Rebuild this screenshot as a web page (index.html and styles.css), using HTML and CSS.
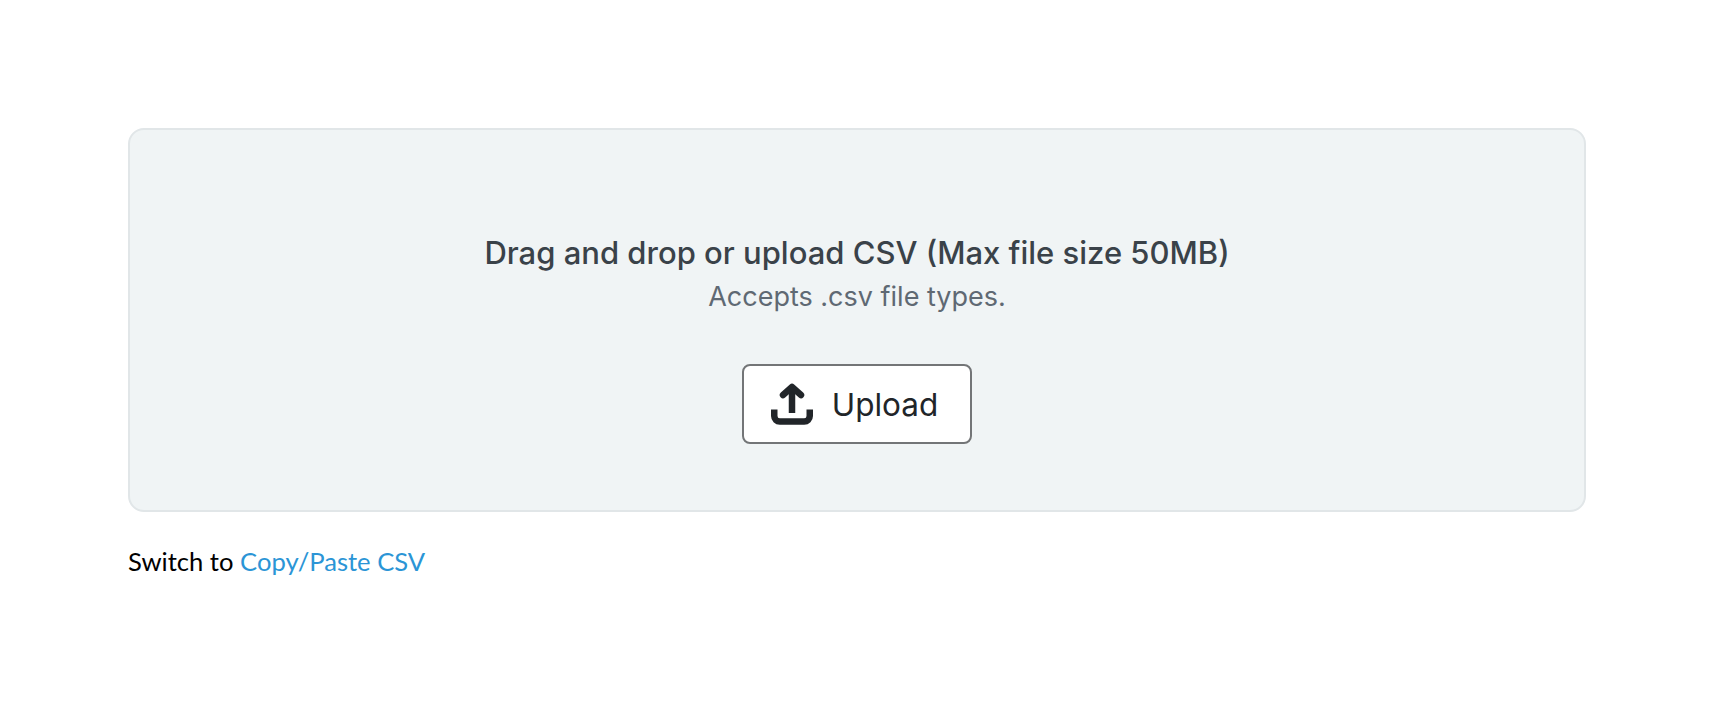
FILE: index.html
```html
<!DOCTYPE html>
<html>
<head>
    <title>Upload CSV</title>
    <link rel="stylesheet" href="styles.css">
</head>
<body>
    <div class="wrapper">
        <div class="dropzone">
            <h2 class="drop-title">Drag and drop or upload CSV (Max file size 50MB)</h2>
            <p class="drop-hint">Accepts .csv file types.</p>
            <button class="upload-btn">
                <svg class="upload-icon" width="42" height="42" viewBox="0 0 42 42" fill="none" stroke="#212529" stroke-width="6.500" stroke-linejoin="round">
                    <path d="M21 30V5"/>
                    <path d="M12 12L21 4L30 12" stroke-linecap="round"/>
                    <path d="M3.250 26.500V33A5.500 5.500 0 0 0 8.750 38.500H33.250A5.500 5.500 0 0 0 38.750 33V26.500"/>
                </svg>
                <span>Upload</span>
            </button>
        </div>
        <p class="switch">Switch to <a href="#">Copy/Paste CSV</a></p>
    </div>
</body>
</html>
```

FILE: styles.css
```css
body { margin: 0; background: #fff; }
.wrapper { padding: 128px 128px 0 128px; }
.dropzone {
    height: 384px;
    box-sizing: border-box;
    padding-top: 103px;
    background: #f0f4f5;
    border: 2px solid #e1e6e8;
    border-radius: 16px;
    text-align: center;
}
.drop-title {
    margin: 0;
    font: 450 31px/40px Inter, sans-serif;
    color: #3a4249;
}
.drop-hint {
    margin: 6px 0 0;
    font: 400 27px/36px Inter, sans-serif;
    color: #5f6973;
}
.upload-btn {
    display: inline-flex;
    align-items: center;
    justify-content: center;
    gap: 19px;
    width: 230px;
    height: 80px;
    margin-top: 49px;
    padding: 0 5px 0 0;
    background: #fff;
    border: 2px solid #737577;
    border-radius: 8px;
    font: 400 31.500px/40px Inter, sans-serif;
    color: #212529;
}
.upload-btn span { padding-top: 2px; }
.upload-icon { display: block; }
.switch {
    margin: 33px 0 0;
    font: 400 25.600px/32px Lato, sans-serif;
    color: #000;
}
.switch a { color: #2b95d6; text-decoration: none; }
```
